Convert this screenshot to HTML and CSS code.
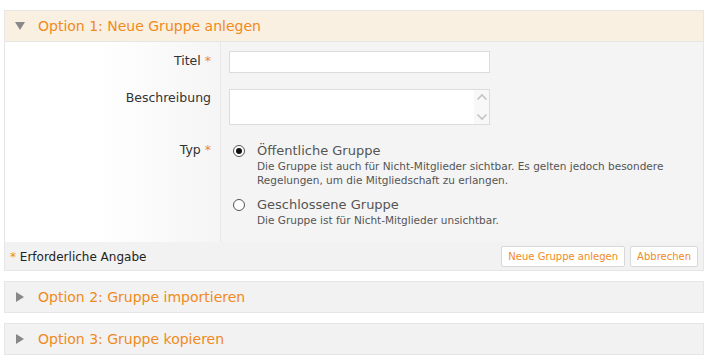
FILE: index.html
```html
<!DOCTYPE html>
<html lang="de">
<head>
    <meta charset="UTF-8">
    <title>Gruppe anlegen</title>
    <link rel="stylesheet" href="styles.css">
</head>
<body>
    <div class="panel open">
        <div class="panel-head">
            <span class="arrow down"></span>
            <span class="panel-title">Option 1: Neue Gruppe anlegen</span>
        </div>
        <div class="panel-body">
            <div class="form-row">
                <label class="label">Titel <span class="req">*</span></label>
                <div class="field"><input type="text" class="text-input"></div>
            </div>
            <div class="form-row">
                <label class="label">Beschreibung</label>
                <div class="field">
                    <div class="textarea">
                        <span class="scroll">
                            <svg width="12" height="32" viewBox="0 0 12 32"><path d="M1.5 8.5 L6 4 L10.5 8.5" fill="none" stroke="#c4c4c4" stroke-width="1.6"/><path d="M1.5 23.5 L6 28 L10.5 23.5" fill="none" stroke="#c4c4c4" stroke-width="1.6"/></svg>
                        </span>
                    </div>
                </div>
            </div>
            <div class="form-row last">
                <label class="label">Typ <span class="req">*</span></label>
                <div class="field">
                    <div class="radio-opt">
                        <span class="radio checked"></span>
                        <div>
                            <div class="radio-title">Öffentliche Gruppe</div>
                            <div class="radio-desc">Die Gruppe ist auch für Nicht-Mitglieder sichtbar. Es gelten jedoch besondere Regelungen, um die Mitgliedschaft zu erlangen.</div>
                        </div>
                    </div>
                    <div class="radio-opt">
                        <span class="radio"></span>
                        <div>
                            <div class="radio-title">Geschlossene Gruppe</div>
                            <div class="radio-desc">Die Gruppe ist für Nicht-Mitglieder unsichtbar.</div>
                        </div>
                    </div>
                </div>
            </div>
        </div>
        <div class="panel-foot">
            <span class="hint"><span class="req">*</span> Erforderliche Angabe</span>
            <div class="buttons">
                <button class="btn">Neue Gruppe anlegen</button>
                <button class="btn">Abbrechen</button>
            </div>
        </div>
    </div>

    <div class="panel">
        <div class="panel-head">
            <span class="arrow right"></span>
            <span class="panel-title">Option 2: Gruppe importieren</span>
        </div>
    </div>

    <div class="panel">
        <div class="panel-head">
            <span class="arrow right"></span>
            <span class="panel-title">Option 3: Gruppe kopieren</span>
        </div>
    </div>
</body>
</html>
```

FILE: styles.css
```css
/* Base */
body {
    margin: 0;
    padding: 10px 18px 0 4px;
    font-family: "DejaVu Sans", Verdana, sans-serif;
    color: #333;
    background: #fff;
}

/* Panels */
.panel {
    border: 1px solid #e6e6e6;
    margin-bottom: 10px;
    background: #f2f2f2;
}

.panel-head {
    display: flex;
    align-items: center;
    height: 30px;
    padding-left: 10px;
}

.panel.open .panel-head {
    background: #faf0e2;
    border-bottom: 1px solid #e6e6e6;
}

.panel-title {
    color: #f08a1c;
    font-size: 14px;
    margin-left: 13px;
}

.arrow {
    width: 0;
    height: 0;
    display: inline-block;
}

.arrow.down {
    border-left: 5px solid transparent;
    border-right: 5px solid transparent;
    border-top: 8px solid #888;
}

.arrow.right {
    border-top: 5px solid transparent;
    border-bottom: 5px solid transparent;
    border-left: 8px solid #888;
    margin-left: 1px;
    margin-right: 1px;
}

/* Form */
.panel-body {
    background: linear-gradient(to right, #fff 0, #fff 90px, #f5f5f5 216px, #f4f4f4 100%);
}

.form-row {
    display: grid;
    grid-template-columns: 216px 1fr;
}

.label {
    text-align: right;
    padding: 11px 9px 0 0;
    font-size: 12.5px;
    border-right: 1px solid #e8e8e8;
}

.form-row:nth-child(2) .label { padding-top: 17px; }
.form-row.last .label { padding-top: 17px; }

.req {
    color: #f08a1c;
}

.field {
    padding: 9px 0 0 8px;
    background: #f4f4f4;
}

.text-input {
    display: block;
    width: 261px;
    height: 22px;
    box-sizing: border-box;
    border: 1px solid #dcdcdc;
    background: #fff;
    margin: 0;
}

.form-row:nth-child(2) .field { padding-top: 16px; }

.textarea {
    width: 261px;
    height: 36px;
    box-sizing: border-box;
    border: 1px solid #dcdcdc;
    background: #fff;
    display: flex;
    justify-content: flex-end;
}

.scroll {
    width: 15px;
    background: #f8f8f8;
    display: flex;
    align-items: center;
    justify-content: center;
}

.form-row.last .field { padding: 18px 0 7px 8px; }

.radio-opt {
    display: flex;
    align-items: flex-start;
    margin-bottom: 10px;
}

.radio-opt:last-child { margin-bottom: 8px; }

.radio {
    width: 12px;
    height: 12px;
    box-sizing: border-box;
    border: 1px solid #555;
    border-radius: 50%;
    background: #fff;
    margin: 2px 12px 0 4px;
    flex: none;
    position: relative;
}

.radio.checked::after {
    content: "";
    position: absolute;
    left: 2px;
    top: 2px;
    width: 6px;
    height: 6px;
    border-radius: 50%;
    background: #111;
}

.radio-title {
    font-size: 13px;
    color: #555;
}

.radio-desc {
    font-size: 10.5px;
    color: #555;
    line-height: 14px;
    margin-top: 1px;
    max-width: 410px;
}

/* Footer */
.panel-foot {
    display: flex;
    justify-content: space-between;
    align-items: center;
    height: 27px;
    padding: 0 5px;
    background: #f2f2f2;
    border-top: 1px solid #f2f2f2;
}

.hint {
    font-size: 12px;
    color: #222;
}

.buttons {
    display: flex;
    gap: 5px;
}

.btn {
    font-family: inherit;
    font-size: 10px;
    color: #f08a1c;
    background: #fff;
    border: 1px solid #d8d8d8;
    border-radius: 2px;
    height: 21px;
    padding: 0 6px;
}
```
